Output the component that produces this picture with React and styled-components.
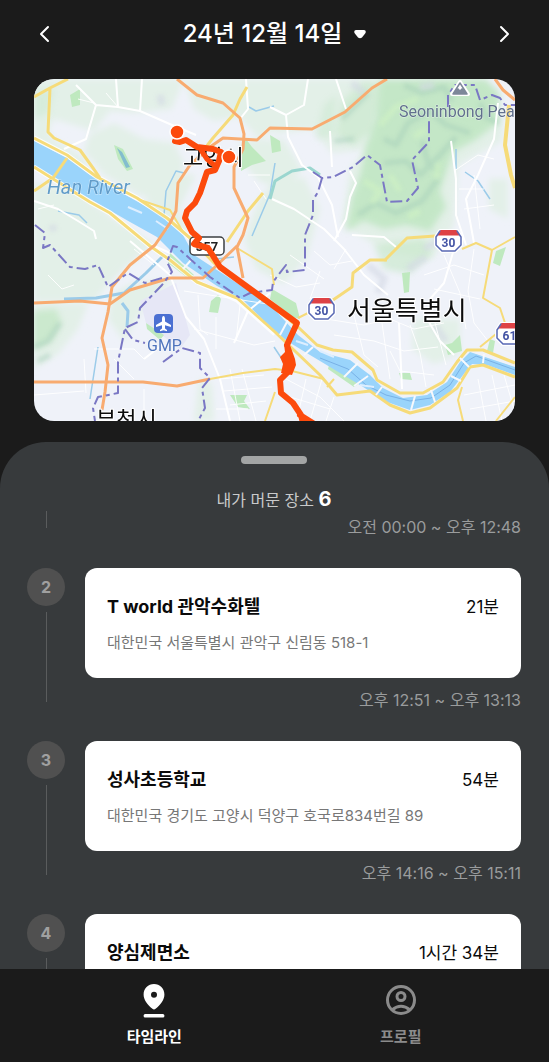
import React from 'react'
import styled, { createGlobalStyle } from 'styled-components'

const visits = [
    { id: 2, name: 'T world 관악수화텔', address: '대한민국 서울특별시 관악구 신림동 518-1', stay: '21분', time: '오후 12:51 ~ 오후 13:13' },
    { id: 3, name: '성사초등학교', address: '대한민국 경기도 고양시 덕양구 호국로834번길 89', stay: '54분', time: '오후 14:16 ~ 오후 15:11' },
    { id: 4, name: '양심제면소', stay: '1시간 34분' },
]

const Shield = ({ x, y, label }) => (
    <g transform={`translate(${x} ${y})`}>
        <path d="M5 1 H22 L26 7 V15 L20 21 H7 L1 15 V7 Z" fill="#fff" stroke="#fff" strokeWidth="4" strokeLinejoin="round" />
        <path d="M5 1 H22 L25 5.500 H2 Z" fill="#de4245" />
        <path d="M5 1 H22 L26 7 V15 L20 21 H7 L1 15 V7 Z" fill="none" stroke="#5868b4" strokeWidth="1.5" strokeLinejoin="round" />
        <path d="M5.500 1 H21.500" stroke="#de4245" strokeWidth="2" />
        <ShieldText x="13.5" y="17">{label}</ShieldText>
    </g>
)

const RouteMap = () => (
    <MapSvg viewBox="0 0 481 342" preserveAspectRatio="xMidYMid slice" role="img" aria-label="이동 경로 지도">
        <defs>
            <filter id="soft" x="-10%" y="-10%" width="120%" height="120%"><feGaussianBlur stdDeviation="3" /></filter>
            <filter id="ridge" x="-20%" y="-20%" width="140%" height="140%"><feGaussianBlur stdDeviation="2" /></filter>
        </defs>
        <rect width="481" height="342" fill="#eff2f9" />

        {/* terrain */}
        <g filter="url(#soft)" fill="#e3f0e8">
            <path d="M0 0 H150 L138 30 L100 34 L76 32 L60 52 L20 40 L8 60 L0 55 Z" />
            <path d="M150 0 H250 V45 L225 60 L205 38 L180 42 L160 30 Z" />
            <path d="M55 56 L80 44 L110 60 L140 64 L150 84 L140 124 L105 116 L70 96 L50 72 Z" />
            <path d="M0 20 L14 40 L16 58 L50 78 L54 92 L30 76 L0 60 Z" />
            <path d="M0 104 L40 110 L80 140 L120 165 L90 190 L72 208 L60 222 H0 Z" />
            <path d="M110 122 L150 95 L162 96 L145 130 L155 155 L140 148 Z" />
            <path d="M205 62 L250 60 L268 90 L250 112 L225 102 L212 88 Z" />
            <path d="M238 105 L270 98 L286 130 L272 180 L250 205 L222 190 L210 160 L225 120 Z" />
            <path d="M240 0 H350 L335 70 L298 74 L278 50 L240 55 Z" />
            <path d="M0 225 H54 L44 250 L24 275 L0 290 Z" />
            <path d="M78 215 L96 205 L140 200 L110 228 L90 262 L74 240 Z" />
            <path d="M165 300 L178 304 L180 342 H160 Z M380 240 H426 V275 L400 285 L378 270 Z" />
            <path d="M418 60 L440 50 L470 30 L468 62 L428 84 Z M455 100 H474 V140 L455 130 Z" />
            <path d="M308 146 L316 90 L340 60 L440 60 L424 90 L420 146 L398 180 L352 172 Z" />
        </g>
        <g filter="url(#soft)" fill="#c4e7c7">
            <path d="M346 0 H452 L466 14 L464 44 L440 62 L420 72 L414 88 L406 112 L412 128 L396 152 L372 146 L350 150 L330 142 L312 152 L318 118 L326 96 L332 66 L342 40 Z" />
            <path d="M0 232 L22 230 L28 244 L18 262 L0 272 Z" opacity=".8" />
            <path d="M302 55 L308 22 L330 2 L350 6 L338 52 L320 66 Z" opacity=".55" />
            <path d="M340 166 L390 160 L398 175 L375 195 L350 190 Z" opacity=".6" />
            <path d="M290 26 L302 16 L300 56 L282 60 Z M0 14 L20 10 L14 34 L0 40 Z" opacity=".4" />
        </g>
        <g filter="url(#ridge)" fill="none" stroke="#a5cdb9" strokeWidth="5" strokeLinejoin="round" opacity=".5">
            <path d="M370 6 L388 14 L410 8 L418 22 M350 60 L362 66 L374 44 L396 32 L412 46 L436 54" />
            <path d="M350 84 L372 82 L386 96 L406 76 L422 58 M324 136 L342 124 L362 134 L388 122 L404 100" />
            <path d="M446 24 L452 38 L464 44 M388 62 L394 84 L404 92" />
            <path d="M308 40 L320 28 L334 14 M300 62 L320 60 M0 268 L14 262 L26 244 M4 282 L16 276" />
        </g>
        <g filter="url(#ridge)" fill="none" stroke="#d3d8e4" strokeWidth="7" opacity=".6">
            <path d="M126 16 L128 26 M334 186 L350 200 L344 214 M390 170 L404 162 M18 146 L20 152 M400 246 L412 262 M374 190 L392 178 M386 8 L400 6 M318 4 L330 14" />
        </g>
        <g filter="url(#ridge)" fill="none" stroke="#cdf0c4" strokeWidth="6" opacity=".8">
            <path d="M346 46 L362 28 L384 20 M380 58 L392 50 M330 102 L346 112 L338 124 M356 96 L366 112 M374 138 L386 132 M402 100 L404 84 M420 30 L438 36" />
        </g>

        {/* airport ground and parks */}
        <path d="M106 222 L142 204 L156 256 L146 270 L112 244 Z" fill="#e6e7f6" />
        <g fill="#bfe9bf">
            <path d="M80 66 L89 70 L99 90 L93 92 L84 80 Z M208 64 L212 60 L218 68 L232 82 L218 86 L207 92 Z" />
            <path d="M236 56 L246 62 L247 72 L238 74 Z M184 216 L187 220 L184 234 L175 233 L177 222 Z" />
            <path d="M238 210 L262 224 L266 240 L258 238 L236 220 Z M368 194 L376 193 L375 213 L370 214 Z" />
            <path d="M411 266 L418 264 L426 256 L428 272 L414 276 Z M365 294 L376 294 L378 301 L367 300 Z" />
            <path d="M196 316 L213 316 L210 322 L216 330 L204 328 Z M462 172 L472 168 L466 187 L459 184 Z" />
            <path d="M112 244 L130 256 L126 261 L113 250 Z M456 260 L461 262 L459 274 L453 272 Z M36 16 L46 10 L46 26 L38 28 Z" />
            <path d="M136 174 L160 196 L155 200 L134 184 Z M296 282 L326 304 L320 308 L294 290 Z" />
        </g>
        <path d="M83 69 L88 73 L96 88 L92 89 Z" fill="#83bdce" />

        {/* streams */}
        <g fill="none" stroke="#9bcbe9" strokeWidth="1.5" strokeLinejoin="round">
            <path d="M241 84 L236 115 L218 157 M130 136 L132 112 L142 92 L150 94 M215 28 L222 32 L240 27 M24 132 L45 136 L53 144" />
            <path d="M422 70 V90 M431 93 L444 102 L456 120 M240 268 L248 280 M64 268 L56 320 M182 180 L200 178" />
            <path d="M236 120 L241 102 L258 92 L276 89 L286 96" stroke="#9bd6cf" strokeWidth="3" />
            <path d="M130 176 L112 194 L90 214 L62 219 L30 220" strokeWidth="3" />
            <path d="M88 224 L94 232 L93 248" strokeWidth="3" />
        </g>

        {/* Han river */}
        <path
            d="M0 62 L33 79 L56 96 L106 124 L129 138 L149 156 L160 176 L183 191 L209 208 L241 231 L264 256 L286 273 L316 281 L336 296 L349 309 L369 319 L393 316 L413 303 L426 283 L436 273 L481 288 V296 L453 286 L438 285 L433 291 L416 313 L396 326 L376 331 L353 323 L326 306 L296 288 L276 276 L253 262 L236 248 L209 221 L183 207 L149 184 L123 158 L96 143 L63 124 L29 104 L0 86 Z"
            fill="#9ad4fb"
        />
        <path d="M286 279 L314 290 L332 306 L352 316 L376 322 L397 319 L416 306 L430 284 L442 277 L481 291" fill="none" stroke="#79b1e6" strokeWidth="1" />
        <path d="M94 128 L108 134 M122 142 L134 150 M262 262 L274 266 M286 272 L300 278 M326 306 L340 308" fill="none" stroke="#ddeeff" strokeWidth="2" />

        {/* local streets */}
        <g fill="none" stroke="#fff" strokeWidth="1" opacity=".9">
            <path d="M196 290 L206 342 M208 290 L222 342 M186 300 L230 296 M190 312 L238 308 M196 326 L232 322 M182 330 L214 330" />
            <path d="M150 212 L240 226 M164 216 L166 250 L174 256 M182 238 V270 M206 226 L202 262 M160 250 L220 266 L241 262" />
            <path d="M252 300 L286 318 L310 342 M256 318 L296 330 M272 300 L264 336 M288 300 L276 342 M300 318 L292 342" />
            <path d="M430 316 L481 306 M436 330 L481 322 M444 300 L452 342 M458 296 L468 342 M470 296 L480 330" />
            <path d="M292 240 L330 246 L356 240 L380 250 L410 244 M300 256 L340 262 L370 272 L404 268 M320 236 L330 276 L344 288 M348 244 L356 300" />
            <path d="M376 246 L386 274 L392 308 M400 240 L412 286 M356 272 L366 292 L400 296 M390 196 L420 186 L450 196 M400 210 L446 220" />
            <path d="M410 176 L426 214 L432 250 M440 170 L434 212 L440 244 L454 262 M300 190 L312 170 M256 176 L290 200 M286 192 L276 220" />
            <path d="M236 196 L262 208 L286 204 M280 172 L296 186 L318 182 M420 92 L444 76 L460 80 M425 110 L450 110 M430 130 L460 126 M440 96 L446 150" />
            <path d="M50 280 L52 314 M60 270 L100 270 L110 280 M0 316 L50 312 M110 310 V342 M80 280 L100 300 M14 196 L28 210 L40 206" />
            <path d="M100 170 L120 186 M214 96 L236 96 M220 102 L232 120 M72 14 L84 28 M4 130 L20 126 M44 20 L60 24" />
        </g>
        <g fill="none" stroke="#fff" strokeWidth="2" strokeLinejoin="round">
            <path d="M42 6 L62 26 L84 28 L106 32 L138 46 L162 56 M62 26 L52 60 L30 70 M84 28 L82 0 M106 32 L108 0 M110 280 L128 266" />
            <path d="M0 122 L24 130 L44 142 L60 152 L62 160 M96 162 L136 196 L152 238 L170 260 L186 300 L196 342 M206 40 L214 30 L212 0" />
            <path d="M252 36 L254 58 L268 86 L284 98 L298 126 L304 158 M236 28 L252 36 M274 0 L270 26 L252 36 M302 0 L312 30 M296 52 L298 88" />
            <path d="M316 92 L322 104 L316 118 L312 140 L300 162 M238 120 L260 130 L290 150 L310 170 L330 196 L354 216 M417 62 L422 100 L422 136 L432 166" />
            <path d="M464 24 L460 60 L444 96 L432 120 L440 164 M318 156 L350 158 L362 168 M392 238 L406 262 L420 276 M365 244 L368 310" />
            <path d="M136 174 L118 166 M200 264 L214 232 L236 214 M420 170 L410 204 L396 220" />
        </g>

        {/* yellow roads */}
        <path d="M0 59 L33 76 L63 98 L103 119 L133 139 L156 159 M0 88 L56 123 L76 134 L116 167 L136 181 L163 203 L203 221 L241 255" fill="none" stroke="#fff" strokeWidth="5" strokeLinejoin="round" opacity=".8" />
        <g fill="none" stroke="#f6db79" strokeWidth="3" strokeLinejoin="round">
            <path d="M0 59 L33 76 L63 98 L103 119 L133 139 L156 159 L180 184 L212 208 L241 229 L264 248 L283 266 L299 271 L318 273 L339 291 L343 301 L366 314 L389 314 L409 303 L423 283 L433 271 L449 271 L481 284" />
            <path d="M0 88 L16 98 L56 123 L76 134 L116 167 L136 181 L163 203 L203 219 L241 253 L263 274 L286 296 L303 316 L336 312 L356 326 L376 334 L396 329 L423 309 L436 288 L449 286 L481 298" />
            <path d="M0 18 L16 9 L34 0 M16 9 L14 53 L20 59 L46 71 L59 89 L66 99 M33 79 L19 99 L0 112" />
            <path d="M213 8 L206 20 L199 36 L179 59 L158 86 M229 114 L214 132 L193 163" />
            <path d="M106 121 L136 131 L149 153 M203 169 L238 190 L240 206 M264 239 L274 234" strokeWidth="2" />
            <path d="M350 182 L361 171 L373 159 L401 157 M353 181 L336 181 L319 194 L318 208 L299 221" />
            <path d="M428 170 L442 164 L458 171 L481 158 M458 171 L449 219 L466 229 L471 244 M446 268 L462 255" strokeWidth="2" />
            <path d="M475 26 L471 66 L477 96 L481 109" strokeWidth="4" />
            <path d="M176 300 L209 294 L241 290 L258 292 L290 300 M428 308 L424 321 L429 342 M293 308 L300 300 M241 313 L231 342 M462 342 L481 318" strokeWidth="2" />
        </g>

        {/* bridges */}
        <path d="M254 241 L246 256 M279 268 L270 276 M324 284 L310 298 M334 297 L320 307 M348 308 L342 316 M381 317 L377 331 M397 311 L401 323 M417 297 L427 302 M426 279 L435 288 M450 275 L449 284 M158 180 L149 190" fill="none" stroke="#f7f8fc" strokeWidth="2" />

        {/* orange roads */}
        <g fill="none" stroke="#f8ab70" strokeWidth="3" strokeLinejoin="round">
            <path d="M143 0 L163 16 L189 24 L206 39 L210 55 L209 70 L200 88 L200 109 L214 139 L209 156 L203 168 L209 199" />
            <path d="M353 0 L338 9 L311 33 L278 50 L236 49 L223 61 L189 59 L176 68 L156 86 L144 104 L142 132 L136 144 L121 166 L96 186 L78 208 L74 233 L68 259 L74 286 L71 313 L68 331" />
            <path d="M0 224 L46 222 L76 225 L96 211 L136 199 L169 199 L180 189 L203 167" />
            <path d="M0 303 H109 L143 307 L176 300" />
            <path d="M461 0 L469 11 L481 21" />
        </g>

        {/* district borders */}
        <g fill="none" stroke="#7a77c4" strokeWidth="2" strokeDasharray="12 4 4 4" strokeLinejoin="round">
            <path d="M279 93 L288 99 L299 98 L319 88 L333 76 L346 86 L353 123 L373 122 L384 109 L378 81 L395 63 V42" />
            <path d="M414 28 V16 L421 6 L441 6 L446 21 L458 16 L466 19 L471 26 H481" />
            <path d="M288 99 L284 113 L279 121 V136 L271 156 V191 L253 193 L252 186 L239 203 L238 211 L216 214 L206 219 L176 198 L143 168 L139 167 L133 183 L138 193 L128 206 L106 229 L104 243 L91 249 L84 283 V314 L64 318 L59 329 L61 342" />
            <path d="M1 146 L11 154 L9 169 L16 166 L36 188 L51 190 L64 186 L74 208 L94 194 L111 204 L128 199" />
            <path d="M91 250 L99 261 L111 264 M129 283 L148 269 L166 274 V289 L176 299 L168 309 L171 329 L164 342" />
        </g>

        {/* labels */}
        <path d="M426 3 L434 15 H418 Z" fill="#7d8799" stroke="#fff" strokeWidth="4" strokeLinejoin="round" />
        <path d="M426 4 L433 15 H419 Z" fill="#fff" stroke="#7d8799" strokeWidth="1.5" strokeLinejoin="round" />
        <path d="M422 10 L424 9 L426 11 L428 9 L430 10 L433 15 H419 Z" fill="#7d8799" />
        <MapText x="365" y="38" $size={16} $color="#61708d">Seoninbong Peak</MapText>
        <MapText x="13" y="115" $size={20} $color="#619cc9" $italic>Han River</MapText>
        <rect x="120" y="235" width="19" height="19" rx="4" fill="#4b70d2" />
        <path d="M129.500 237 C130.600 237 131 238.500 131 240 V242.500 L137 246 V248 L131 246.300 V249.500 L133 251 V252.200 L129.500 251.300 L126 252.200 V251 L128 249.500 V246.300 L122 248 V246 L128 242.500 V240 C128 238.500 128.400 237 129.500 237 Z" fill="#fff" />
        <MapText x="113" y="272" $size={16} $color="#4f74bd">GMP</MapText>
        <CityText x="149" y="86" $size={22}>고양시</CityText>
        <CityText x="313" y="241" $size={26}>서울특별시</CityText>
        <CityText x="62" y="348" $size={22}>부천시</CityText>
        <rect x="156" y="158" width="34" height="18" rx="4" fill="#fff" stroke="#3d4043" strokeWidth="1.5" />
        <RoadText x="173" y="172">357</RoadText>
        <Shield x={401} y={151} label="30" />
        <Shield x={274} y={219} label="30" />
        <Shield x={462} y={244} label="61" />

        {/* travelled path */}
        <g fill="none" stroke="#fc4a0c" strokeWidth="6" strokeLinejoin="round" strokeLinecap="round">
            <path d="M141 62 L146 63 L152 61 L163 68 L179 70 L187 73 L185 82 L181 91 L173 93 L166 114 L161 124 L153 132 L151 139 L158 153 L165 159 L160 165 L174 169 L186 188 L241 228 L263 244 L253 266" />
            <path d="M255 292 L246 301 L247 314 L259 324 L267 336 L270 348 M266 336 L282 346" />
            <path d="M167 71 L173 80 L180 86" strokeWidth="5" />
        </g>
        <path d="M250 265 L256 266 L261 280 L262 286 L258 296 L247 294 L249 285 L246 278 L251 273 Z" fill="#fc4a0c" />
        <circle cx="143" cy="53" r="7" fill="#fc4a0c" stroke="#fff" strokeWidth="1.500" />
        <circle cx="195" cy="78" r="7" fill="#fc4a0c" stroke="#fff" strokeWidth="1.500" />
    </MapSvg>
)

const Visit = ({ id, name, address, stay, time }) => (
    <Entry>
        <Rail>
            <Badge>{id}</Badge>
            <Line />
        </Rail>
        <Details>
            <Card>
                <CardTop>
                    <Name>{name}</Name>
                    <Stay>{stay}</Stay>
                </CardTop>
                {address && <Address>{address}</Address>}
            </Card>
            {time && <Time>{time}</Time>}
        </Details>
    </Entry>
)

export default function App() {
    return (
        <Screen>
            <GlobalStyle />
            <Header>
                <IconButton aria-label="이전 날짜">
                    <svg width="24" height="24" fill="none" stroke="#fff" strokeWidth="2" strokeLinecap="round" strokeLinejoin="round"><path d="M16 5 L9 12 L16 19" /></svg>
                </IconButton>
                <DateButton>
                    24년 12월 14일
                    <svg width="12" height="10" fill="#fff"><path d="M2 1 H10 Q12.500 1.500 11.500 4 L8 8.500 Q6 10 4 8.500 L0.500 4 Q-.5 1.500 2 1 Z" /></svg>
                </DateButton>
                <IconButton aria-label="다음 날짜">
                    <svg width="24" height="24" fill="none" stroke="#fff" strokeWidth="2" strokeLinecap="round" strokeLinejoin="round"><path d="M8 5 L15 12 L8 19" /></svg>
                </IconButton>
            </Header>
            <MapBox><RouteMap /></MapBox>
            <Sheet>
                <Handle />
                <SheetTitle>내가 머문 장소 <Count>6</Count></SheetTitle>
                <Timeline>
                    <Entry>
                        <Rail><Line $short /></Rail>
                        <Details><Time $first>오전 00:00 ~ 오후 12:48</Time></Details>
                    </Entry>
                    {visits.map(visit => <Visit key={visit.id} {...visit} />)}
                </Timeline>
            </Sheet>
            <TabBar>
                <Tab href="#timeline" $active>
                    <svg width="36" height="38" fill="currentColor">
                        <path fillRule="evenodd" d="M18 2 C23.800 2 28.400 6.500 28.400 12.400 C28.400 17.500 24.800 22.600 19.600 26.800 Q18 28 16.400 26.800 C11.200 22.600 7.600 17.500 7.600 12.400 C7.600 6.500 12.200 2 18 2 Z M18 9.800 A3 3 0 1 0 18 15.800 A3 3 0 1 0 18 9.800 Z" />
                        <rect x="7.600" y="32" width="20.800" height="3.600" rx="1.500" />
                    </svg>
                    타임라인
                </Tab>
                <Tab href="#profile">
                    <svg width="36" height="38" fill="none" stroke="currentColor" strokeWidth="3">
                        <circle cx="18" cy="18" r="13.500" />
                        <circle cx="18" cy="14.500" r="4" />
                        <path d="M9 28 Q18 20.500 27 28" />
                    </svg>
                    프로필
                </Tab>
            </TabBar>
        </Screen>
    )
}

const GlobalStyle = createGlobalStyle`
    * {
        box-sizing: border-box;
    }

    body {
        margin: 0;
        background: #1b1b1b;
        font-family: Inter, "Noto Sans CJK KR", sans-serif;
    }

    button {
        border: 0;
        padding: 0;
        background: none;
        color: inherit;
        font: inherit;
        cursor: pointer;
    }
`

const Screen = styled.div`
    display: flex;
    flex-direction: column;
    height: 100vh;
    background: #1b1b1b;
    overflow: hidden;
`

const Header = styled.header`
    display: flex;
    align-items: center;
    justify-content: space-between;
    flex-shrink: 0;
    height: 68px;
    padding: 0 32px;
    color: #fff;
`

const IconButton = styled.button`
    display: flex;
`

const DateButton = styled.button`
    && {
        display: flex;
        align-items: center;
        gap: 12px;
        font-size: 24px;
        font-weight: 500;
        line-height: 32px;
    }
`

const MapBox = styled.div`
    flex-shrink: 0;
    height: 342px;
    margin: 11px 34px 21px;
    border-radius: 20px;
    overflow: hidden;
`

const MapSvg = styled.svg`
    display: block;
    width: 100%;
    height: 100%;
`

const MapText = styled.text`
    font-family: Roboto, sans-serif;
    font-size: ${props => props.$size}px;
    font-style: ${props => props.$italic ? 'italic' : 'normal'};
    fill: ${props => props.$color};
    stroke: rgba(255, 255, 255, 0.5);
    stroke-width: 1px;
    paint-order: stroke;
`

const CityText = styled.text`
    font-family: "Noto Sans CJK KR", sans-serif;
    font-size: ${props => props.$size}px;
    fill: #0c0c0c;
    stroke: #fff;
    stroke-width: 2px;
    paint-order: stroke;
`

const ShieldText = styled.text`
    font-family: Roboto, sans-serif;
    font-size: 12px;
    font-weight: 700;
    text-anchor: middle;
    fill: #4353a4;
`

const RoadText = styled(ShieldText)`
    font-size: 13px;
    fill: #222;
`

const Sheet = styled.main`
    display: flex;
    flex-direction: column;
    flex: 1;
    min-height: 0;
    padding: 14px 28px 0 27px;
    border-radius: 46px 46px 0 0;
    background: #373a3c;
`

const Handle = styled.div`
    flex-shrink: 0;
    align-self: center;
    width: 66px;
    height: 8px;
    border-radius: 4px;
    background: #a3a5a5;
`

const SheetTitle = styled.h2`
    flex-shrink: 0;
    height: 24px;
    margin: 23px 0 0;
    color: #c9cacb;
    font-size: 16px;
    font-weight: 400;
    line-height: 24px;
    text-align: center;
`

const Count = styled.strong`
    color: #fff;
    font-size: 20px;
    font-weight: 700;
`

const Timeline = styled.div`
    flex: 1;
    min-height: 0;
    overflow-y: auto;
    scrollbar-width: none;
`

const Entry = styled.article`
    display: flex;
    gap: 20px;
    margin-bottom: 31px;
`

const Rail = styled.div`
    display: flex;
    flex-direction: column;
    align-items: center;
    gap: 6px;
    width: 38px;
    flex-shrink: 0;
`

const Badge = styled.div`
    width: 38px;
    height: 38px;
    border-radius: 50%;
    background: #505050;
    color: #a0a0a0;
    font-size: 16px;
    font-weight: 700;
    line-height: 38px;
    text-align: center;
`

const Line = styled.div`
    width: 1px;
    height: ${props => props.$short ? '17px' : '90px'};
    background: #5a5c5d;
`

const Details = styled.div`
    flex: 1;
    min-width: 0;
`

const Card = styled.div`
    min-height: 110px;
    padding: 27px 22px 22px;
    border-radius: 12px;
    background: #fff;
`

const CardTop = styled.div`
    display: flex;
    align-items: center;
    justify-content: space-between;
    line-height: 24px;
`

const Name = styled.h3`
    margin: 0;
    color: #0a0a0a;
    font-size: 18px;
    font-weight: 700;
`

const Stay = styled.span`
    color: #0a0a0a;
    font-size: 17px;
`

const Address = styled.p`
    margin: 13px 0 0;
    color: #777;
    font-size: 15px;
    line-height: 22px;
`

const Time = styled.div`
    margin-top: ${props => props.$first ? '6px' : '12px'};
    color: #9a9c9d;
    font-size: 16px;
    line-height: 20px;
    text-align: right;
`

const TabBar = styled.nav`
    display: grid;
    grid-template-columns: 1fr 1fr;
    flex-shrink: 0;
    height: 93px;
    padding: 13px 25px 0 31px;
    background: #1b1b1b;
`

const Tab = styled.a`
    display: flex;
    flex-direction: column;
    align-items: center;
    gap: 6px;
    color: ${props => props.$active ? '#fff' : '#8b8b8b'};
    font-size: 15px;
    font-weight: 600;
    line-height: 22px;
    text-decoration: none;
`
